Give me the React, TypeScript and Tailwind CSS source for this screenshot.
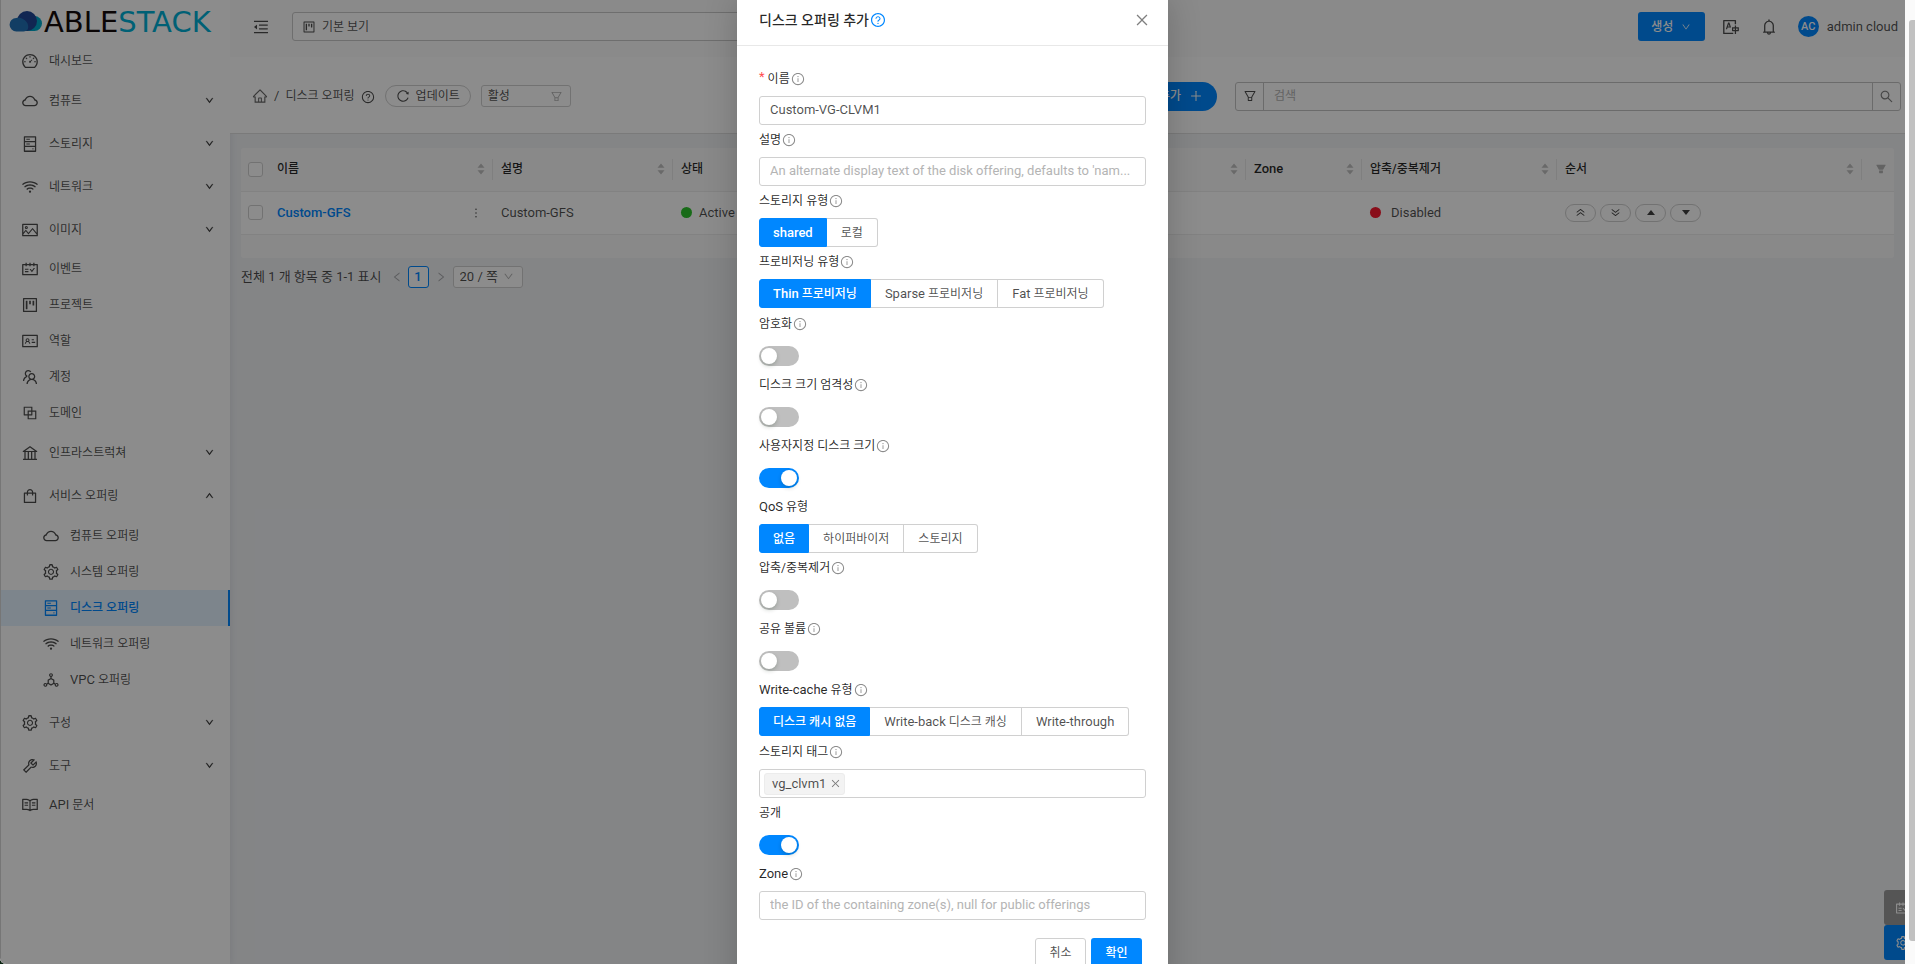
import React, { useState } from 'react'
import type { IconType } from 'react-icons'
import {
  AiFillFilter,
  AiOutlineBank,
  AiOutlineBell,
  AiOutlineBlock,
  AiOutlineClose,
  AiOutlineCloud,
  AiOutlineDashboard,
  AiOutlineDeploymentUnit,
  AiOutlineDoubleLeft,
  AiOutlineDown,
  AiOutlineFilter,
  AiOutlineHdd,
  AiOutlineHome,
  AiOutlineIdcard,
  AiOutlineInfoCircle,
  AiOutlineLeft,
  AiOutlineMenuFold,
  AiOutlineMore,
  AiOutlinePicture,
  AiOutlinePlus,
  AiOutlineProject,
  AiOutlineQuestionCircle,
  AiOutlineRead,
  AiOutlineReload,
  AiOutlineRight,
  AiOutlineSchedule,
  AiOutlineSearch,
  AiOutlineSetting,
  AiOutlineShopping,
  AiOutlineTeam,
  AiOutlineTool,
  AiOutlineTranslation,
  AiOutlineUp,
  AiOutlineWifi,
} from 'react-icons/ai'

/* Latin runs are set one step larger than Hangul so both scripts look even. */
const L = ({ children }: { children: React.ReactNode }) => <span className="text-[13px]">{children}</span>

/* ---------- side menu ---------- */

type Item = { icon: IconType; text: React.ReactNode; group?: boolean; children?: Item[]; active?: boolean }

const menu: Item[] = [
  { icon: AiOutlineDashboard, text: '대시보드' },
  { icon: AiOutlineCloud, text: '컴퓨트', group: true },
  { icon: AiOutlineHdd, text: '스토리지', group: true },
  { icon: AiOutlineWifi, text: '네트워크', group: true },
  { icon: AiOutlinePicture, text: '이미지', group: true },
  { icon: AiOutlineSchedule, text: '이벤트' },
  { icon: AiOutlineProject, text: '프로젝트' },
  { icon: AiOutlineIdcard, text: '역할' },
  { icon: AiOutlineTeam, text: '계정' },
  { icon: AiOutlineBlock, text: '도메인' },
  { icon: AiOutlineBank, text: '인프라스트럭쳐', group: true },
  {
    icon: AiOutlineShopping,
    text: '서비스 오퍼링',
    group: true,
    children: [
      { icon: AiOutlineCloud, text: '컴퓨트 오퍼링' },
      { icon: AiOutlineSetting, text: '시스템 오퍼링' },
      { icon: AiOutlineHdd, text: '디스크 오퍼링', active: true },
      { icon: AiOutlineWifi, text: '네트워크 오퍼링' },
      { icon: AiOutlineDeploymentUnit, text: <><L>VPC</L> 오퍼링</> },
    ],
  },
  { icon: AiOutlineSetting, text: '구성', group: true },
  { icon: AiOutlineTool, text: '도구', group: true },
  { icon: AiOutlineRead, text: <><L>API</L> 문서</> },
]

function MenuItem({ item }: { item: Item }) {
  const Icon = item.icon
  const Arrow = item.children ? AiOutlineUp : AiOutlineDown
  return (
    <li>
      {item.group ? (
        <button className="flex h-[43px] w-full items-center pl-5 pr-4">
          <Icon size={18} />
          <span className="ml-[10px] flex-1 text-left">{item.text}</span>
          <Arrow size={9} className="stroke-[60]" />
        </button>
      ) : (
        <a href="#" className="flex h-9 items-center pl-5">
          <Icon size={18} />
          <span className="ml-[10px]">{item.text}</span>
        </a>
      )}
      {item.children && (
        <ul className="pb-[3px] pt-px">
          {item.children.map((c, i) => (
            <li key={i}>
              <a
                href="#"
                className={
                  c.active
                    ? 'flex h-9 items-center border-r-2 border-[#0087ff] bg-[#e3f2ff] pl-[41px] font-medium text-[#0087ff]'
                    : 'flex h-9 items-center pl-[41px]'
                }
              >
                <c.icon size={18} />
                <span className="ml-[10px]">{c.text}</span>
              </a>
            </li>
          ))}
        </ul>
      )}
    </li>
  )
}

function Logo() {
  return (
    <svg className="h-[42px] w-[228px]" viewBox="0 0 228 42" role="img" aria-label="ABLESTACK">
      <circle cx="33.500" cy="23.500" r="7.500" fill="#00aacb" />
      <rect x="18" y="22" width="16" height="9" fill="#00aacb" />
      <circle cx="26" cy="21" r="10" fill="#1f4596" />
      <path d="M15.500 31.500a6.800 6.800 0 0 1-.300-13.600c5-1 9.300 1.600 11.300 5.600 1.700 3.800.500 8-4 8z" fill="#2272b6" />
      <text x="43" y="32" fontFamily="DejaVu Sans" fontSize="29" fill="#140c0c">
        ABLE
        <tspan fill="#00b0d6">STACK</tspan>
      </text>
    </svg>
  )
}

/* ---------- list page ---------- */

function Sorter() {
  return (
    <svg width="8" height="12" viewBox="0 0 8 12" fill="#bfbfbf" className="shrink-0">
      <path d="M4 0.500 7.500 4.800h-7zM4 11.500 7.500 7.200h-7z" />
    </svg>
  )
}

function Th({ children }: { children: React.ReactNode }) {
  return (
    <th className="h-[43px] p-0 text-left font-medium text-black/85">
      <div className="flex h-[21px] items-center justify-between border-r border-[#e8e8e8] pl-2 pr-[7px]">
        <span>{children}</span>
        <Sorter />
      </div>
    </th>
  )
}

const tick = 'block size-[15px] appearance-none rounded-[3px] border border-[#d0d0d0] bg-white'
const pill = 'flex h-[18px] w-[31px] items-center justify-center rounded-full border border-[#d0d0d0] bg-white text-black/75'

function ListTable() {
  return (
    <div className="overflow-hidden rounded-[3px] bg-[#fafafa] pb-[23px]">
      <table className="w-full table-fixed border-collapse">
        <colgroup>
          <col className="w-[28px]" />
          <col className="w-[224px]" />
          <col className="w-[180px]" />
          <col />
          <col className="w-[116px]" />
          <col className="w-[195px]" />
          <col className="w-[305px]" />
          <col className="w-[32px]" />
        </colgroup>
        <thead>
          <tr className="border-b border-[#ededed]">
            <th className="p-0 pl-[7px]"><input type="checkbox" aria-label="전체 선택" className={tick} /></th>
            <Th>이름</Th>
            <Th>설명</Th>
            <Th>상태</Th>
            <Th><L>Zone</L></Th>
            <Th>압축/중복제거</Th>
            <Th>순서</Th>
            <th className="p-0"><button aria-label="필터" className="ml-[13px] block text-[#b5b5b5]"><AiFillFilter size={12} /></button></th>
          </tr>
        </thead>
        <tbody>
          <tr className="h-[43px] border-b border-[#ededed] bg-white text-[13px]">
            <td className="p-0 pl-[7px]"><input type="checkbox" aria-label="Custom-GFS" className={tick} /></td>
            <td className="p-0 pl-2 pr-2">
              <div className="flex items-center justify-between">
                <a href="#" className="font-medium text-[#0087ff]">Custom-GFS</a>
                <button aria-label="더보기" className="flex size-[18px] items-center justify-center rounded-full"><AiOutlineMore size={14} /></button>
              </div>
            </td>
            <td className="p-0 pl-2">Custom-GFS</td>
            <td className="p-0 pl-2">
              <span className="flex items-center gap-[7px]"><i className="size-[11px] rounded-full bg-[#2dc42d]" />Active</span>
            </td>
            <td className="p-0" />
            <td className="p-0 pl-2">
              <span className="flex items-center gap-[10px]"><i className="size-[11px] rounded-full bg-[#fa1b30]" />Disabled</span>
            </td>
            <td className="p-0 pl-2">
              <div className="flex gap-1">
                <button aria-label="맨 위로" className={pill}><AiOutlineDoubleLeft size={11} className="rotate-90" /></button>
                <button aria-label="맨 아래로" className={pill}><AiOutlineDoubleLeft size={11} className="-rotate-90" /></button>
                <button aria-label="위로" className={pill}><svg width="8" height="5"><path d="M4 0 8 5H0z" fill="currentColor" /></svg></button>
                <button aria-label="아래로" className={pill}><svg width="8" height="5"><path d="M0 0H8L4 5z" fill="currentColor" /></svg></button>
              </div>
            </td>
            <td className="p-0" />
          </tr>
        </tbody>
      </table>
    </div>
  )
}

/* ---------- dialog ---------- */

function Field({ label, id, info = true, required, children }: { label: React.ReactNode; id: string; info?: boolean; required?: boolean; children: React.ReactNode }) {
  return (
    <div className="mb-px">
      <div className="mb-[3px] flex h-7 items-center text-black/85">
        {required && <span className="mr-[3px] h-5 text-[13px] leading-4 text-[#ff4d4f]">*</span>}
        <label htmlFor={id} id={id + '-label'}>{label}</label>
        {info && <AiOutlineInfoCircle size={14} className="ml-px text-black/45" />}
      </div>
      <div className="flex h-[29px] items-center">{children}</div>
    </div>
  )
}

function Switch({ id, on = false }: { id: string; on?: boolean }) {
  return (
    <input
      id={id}
      type="checkbox"
      role="switch"
      defaultChecked={on}
      className="flex h-5 w-10 appearance-none items-center rounded-full bg-[#bfbfbf] px-[2px] before:size-4 before:rounded-full before:bg-white before:shadow-[0_2px_4px_rgba(0,35,11,0.2)] checked:justify-end checked:bg-[#0087ff]"
    />
  )
}

function Segments({ id, options }: { id: string; options: React.ReactNode[] }) {
  const [value, setValue] = useState(0)
  return (
    <div role="radiogroup" aria-labelledby={id + '-label'} className="flex">
      {options.map((o, i) => (
        <label
          key={i}
          className={
            i === value
              ? 'relative flex h-[29px] items-center border border-[#0087ff] bg-[#0087ff] px-[13px] font-medium text-white first:rounded-l-[3px] last:rounded-r-[3px]'
              : 'relative flex h-[29px] items-center border border-l-0 border-[#d0d0d0] px-[14px] first:rounded-l-[3px] first:border-l last:rounded-r-[3px]'
          }
        >
          <input id={i === 0 ? id : undefined} type="radio" name={id} checked={i === value} onChange={() => setValue(i)} className="sr-only" />
          <span>{o}</span>
        </label>
      ))}
    </div>
  )
}

const box = 'h-[29px] w-full truncate rounded-[3px] border border-[#d0d0d0] bg-white px-[10px] pb-[2px] text-[13px] outline-none placeholder:text-[#b4b4b4]'

function Dialog() {
  return (
    <div role="dialog" aria-modal="true" aria-labelledby="dialog-title" className="-mt-1 w-[431px] shrink-0 self-start bg-white pb-6 shadow-[0_4px_32px_rgba(0,0,0,0.2)]">
      <header className="flex h-[50px] items-center border-b border-[#e8e8e8] px-[22px] pb-[2px]">
        <h2 id="dialog-title" className="text-[14px] font-medium text-black/85">디스크 오퍼링 추가</h2>
        <a href="#" aria-label="도움말" className="ml-px text-[#0087ff]"><AiOutlineQuestionCircle size={16} /></a>
        <button aria-label="닫기" className="ml-auto mr-[-4px] text-black/50"><AiOutlineClose size={16} /></button>
      </header>
      <form className="flex flex-col gap-px px-[22px] pt-[19px]" onSubmit={(e) => e.preventDefault()}>
        <section>
          <Field id="name" label="이름" required><input id="name" className={box} defaultValue="Custom-VG-CLVM1" /></Field>
          <Field id="desc" label="설명"><input id="desc" className={box} placeholder="An alternate display text of the disk offering, defaults to 'nam..." /></Field>
          <Field id="storage" label="스토리지 유형"><Segments id="storage" options={[<L>shared</L>, '로컬']} /></Field>
          <Field id="prov" label="프로비저닝 유형"><Segments id="prov" options={[<><L>Thin</L> 프로비저닝</>, <><L>Sparse</L> 프로비저닝</>, <><L>Fat</L> 프로비저닝</>]} /></Field>
        </section>
        <section>
          <Field id="encrypt" label="암호화"><Switch id="encrypt" /></Field>
          <Field id="strict" label="디스크 크기 엄격성"><Switch id="strict" /></Field>
          <Field id="custom" label="사용자지정 디스크 크기"><Switch id="custom" on /></Field>
          <Field id="qos" info={false} label={<><L>QoS</L> 유형</>}><Segments id="qos" options={['없음', '하이퍼바이저', '스토리지']} /></Field>
          <Field id="dedup" label="압축/중복제거"><Switch id="dedup" /></Field>
          <Field id="shared" label="공유 볼륨"><Switch id="shared" /></Field>
          <Field id="cache" label={<><L>Write-cache</L> 유형</>}><Segments id="cache" options={['디스크 캐시 없음', <><L>Write-back</L> 디스크 캐싱</>, <L>Write-through</L>]} /></Field>
        </section>
        <section>
          <Field id="tags" label="스토리지 태그">
            <div className="flex h-[29px] w-full items-center rounded-[3px] border border-[#d0d0d0] px-1">
              <span className="flex h-[22px] items-center gap-1 rounded-[3px] border border-[#ececec] bg-[#f3f3f3] px-[7px] pr-[3px] text-[13px]">
                vg_clvm1
                <button type="button" aria-label="vg_clvm1 삭제" className="text-black/50"><AiOutlineClose size={11} /></button>
              </span>
              <input id="tags" className="min-w-0 flex-1 outline-none" />
            </div>
          </Field>
          <Field id="public" info={false} label="공개"><Switch id="public" on /></Field>
          <Field id="zone" label={<L>Zone</L>}><input id="zone" className={box} placeholder="the ID of the containing zone(s), null for public offerings" /></Field>
        </section>
        <div className="mt-4 flex justify-end gap-[5px] pr-1">
          <button type="button" className="h-[29px] w-[51px] rounded-[3px] border border-[#d0d0d0]">취소</button>
          <button type="submit" className="h-[29px] w-[51px] rounded-[3px] bg-[#0087ff] font-medium text-white">확인</button>
        </div>
      </form>
    </div>
  )
}

/* ---------- page ---------- */

export default function App() {
  return (
    <div className="flex h-screen overflow-hidden bg-[#0b2411] font-['Roboto','Noto_Sans_CJK_KR',sans-serif] text-[12px] leading-5 text-black/70">
      <div className="relative flex min-w-0 flex-1 overflow-hidden rounded-bl-[6px] bg-[#f0f2f5]">
        <aside className="w-[230px] shrink-0 border-l border-[#d8d8d8] bg-white shadow-[2px_0_6px_rgba(0,21,41,0.06)]">
          <a href="#" className="block h-[43px]"><Logo /></a>
          <nav><ul>{menu.map((m, i) => <MenuItem key={i} item={m} />)}</ul></nav>
        </aside>

        <main className="min-w-0 flex-1">
          <header className="flex h-[57px] items-center bg-[#fcfcfc] pb-1 pl-[22px] pr-[7px]">
            <button aria-label="메뉴 접기"><AiOutlineMenuFold size={18} /></button>
            <div className="ml-[22px] flex h-[29px] max-w-[700px] flex-1 items-center rounded-[3px] border border-[#c8c8c8] bg-white pl-[9px]">
              <AiOutlineProject size={14} />
              <select aria-label="프로젝트" className="ml-[6px] flex-1 appearance-none bg-transparent outline-none"><option>기본 보기</option></select>
            </div>
            <button className="ml-auto flex h-[29px] w-[67px] items-center justify-center gap-2 rounded-[3px] bg-[#0087ff] font-medium text-white">생성<AiOutlineDown size={10} /></button>
            <button aria-label="언어" className="ml-[17px]"><AiOutlineTranslation size={18} /></button>
            <button aria-label="알림" className="ml-5"><AiOutlineBell size={18} /></button>
            <button className="ml-5 flex items-center gap-2 text-[13px]">
              <span className="flex size-[21px] items-center justify-center rounded-full bg-[#0087ff] text-[11px] font-medium text-white">AC</span>
              admin cloud
            </button>
          </header>

          <div className="flex h-[77px] items-center border-b border-[#dedede] bg-white pl-[22px] pr-1 pt-[2px]">
            <a href="#" aria-label="홈"><AiOutlineHome size={16} className="text-black/60" /></a>
            <span className="mx-[6px] text-[13px]">/</span>
            <span>디스크 오퍼링</span>
            <a href="#" aria-label="도움말" className="ml-[6px] pt-[2px]"><AiOutlineQuestionCircle size={14} /></a>
            <button className="ml-[10px] flex h-[22px] items-center gap-[6px] rounded-full border border-[#d0d0d0] px-[10px]"><AiOutlineReload size={14} />업데이트</button>
            <div className="ml-[10px] flex h-[22px] w-[90px] items-center rounded-[3px] border border-[#d0d0d0] pl-[6px] pr-[7px]">
              <select aria-label="상태 필터" className="min-w-0 flex-1 appearance-none bg-transparent outline-none"><option>활성</option></select>
              <AiOutlineFilter size={13} className="text-black/30" />
            </div>
            <button className="ml-auto flex h-[29px] shrink-0 items-center gap-2 rounded-full bg-[#0087ff] px-[14px] font-medium text-white">디스크 오퍼링 추가<AiOutlinePlus size={14} /></button>
            <div className="ml-[18px] flex h-[29px] w-[666px] rounded-[3px] border border-[#c4c4c4]">
              <button aria-label="필터" className="flex w-7 items-center justify-center border-r border-[#c4c4c4]"><AiOutlineFilter size={14} /></button>
              <input aria-label="검색" placeholder="검색" className="min-w-0 flex-1 px-[10px] outline-none placeholder:text-[#b4b4b4]" />
              <button aria-label="검색하기" className="flex w-7 items-center justify-center border-l border-[#c4c4c4] text-black/50"><AiOutlineSearch size={15} /></button>
            </div>
          </div>

          <section className="pl-[11px] pr-[11px] pt-[14px]">
            <ListTable />
            <div className="mt-2 flex items-center">
              <span className="text-[13px]">전체 1 개 항목 중 1-1 표시</span>
              <button aria-label="이전" className="ml-[9px] text-black/30"><AiOutlineLeft size={12} /></button>
              <button className="ml-[5px] h-[22px] w-[21px] rounded-[3px] border border-[#0087ff] bg-white text-[13px] font-medium leading-5 text-[#0087ff]">1</button>
              <button aria-label="다음" className="ml-[6px] text-black/30"><AiOutlineRight size={12} /></button>
              <div className="ml-[6px] flex h-[22px] w-[70px] items-center rounded-[3px] border border-[#d0d0d0] bg-white pl-[6px] pr-2">
                <select aria-label="쪽당 항목 수" className="min-w-0 flex-1 appearance-none bg-transparent text-[13px] outline-none"><option>20 / 쪽</option></select>
                <AiOutlineDown size={11} className="text-black/30" />
              </div>
            </div>
          </section>
        </main>

        <div className="absolute bottom-1 right-0 w-[21px] overflow-hidden text-white">
          <button aria-label="이벤트" className="flex h-[35px] w-10 items-center rounded-l-[3px] bg-[#9c9c9c] pl-[11px]"><AiOutlineSchedule size={16} /></button>
          <button aria-label="설정" className="flex h-[35px] w-10 items-center rounded-l-[3px] bg-[#0087ff] pl-[11px]"><AiOutlineSetting size={16} /></button>
        </div>

        <div className="absolute inset-0 flex justify-center overflow-hidden bg-black/45">
          <Dialog />
        </div>
      </div>

      <div className="flex w-[10px] justify-end bg-[#fafafa] pb-[23px] pt-5">
        <div className="w-[6px] rounded-l-[3px] bg-[#c1c1c1]" />
      </div>
    </div>
  )
}
